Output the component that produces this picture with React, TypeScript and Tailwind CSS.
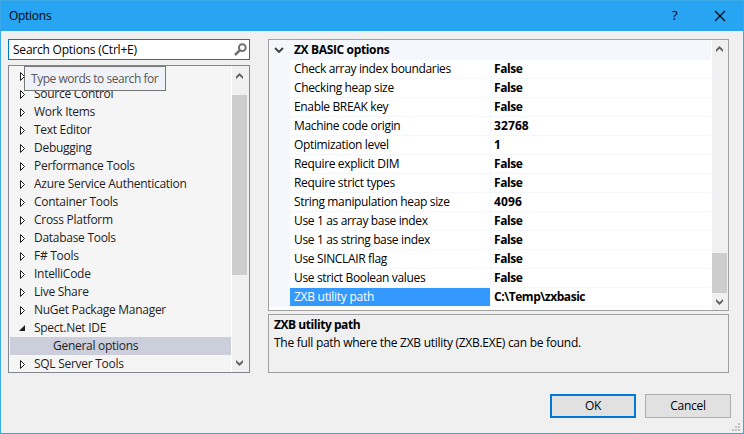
import React from "react";

// The topmost row is scrolled under the search tooltip, so only its expander shows.
const tree = [
  "",
  "Source Control",
  "Work Items",
  "Text Editor",
  "Debugging",
  "Performance Tools",
  "Azure Service Authentication",
  "Container Tools",
  "Cross Platform",
  "Database Tools",
  "F# Tools",
  "IntelliCode",
  "Live Share",
  "NuGet Package Manager",
  "Spect.Net IDE",
  "General options",
  "SQL Server Tools",
];

const options: [string, string][] = [
  ["Check array index boundaries", "False"],
  ["Checking heap size", "False"],
  ["Enable BREAK key", "False"],
  ["Machine code origin", "32768"],
  ["Optimization level", "1"],
  ["Require explicit DIM", "False"],
  ["Require strict types", "False"],
  ["String manipulation heap size", "4096"],
  ["Use 1 as array base index", "False"],
  ["Use 1 as string base index", "False"],
  ["Use SINCLAIR flag", "False"],
  ["Use strict Boolean values", "False"],
  ["ZXB utility path", "C:\\Temp\\zxbasic"],
];

function Chevron({ up = false }: { up?: boolean }) {
  return (
    <svg className="block h-[17px] w-[15px]" viewBox="0 0 15 17">
      <path
        d={up ? "M7.5 5 11 8.5V11L7.5 7.7 4 11V8.5Z" : "M7.5 11 11 7.5V5L7.5 8.3 4 5V7.5Z"}
        fill="#606060"
      />
    </svg>
  );
}

function TreeRow({ label }: { label: string }) {
  const child = label === "General options";
  const open = label === "Spect.Net IDE";
  return (
    <div
      className={
        child
          ? "flex h-[18px] shrink-0 items-center bg-[#cccedb] pl-[43px]"
          : "flex h-[18px] shrink-0 items-center"
      }
    >
      {!child && (
        <svg className="ml-[9px] mr-[4px] h-[18px] w-[11px] shrink-0" viewBox="0 0 11 18">
          {open ? (
            <path d="M6 6v6H0Z" fill="#1e1e1e" />
          ) : (
            <path d="M1.5 5.5v8L5.5 9.5Z" fill="#fff" stroke="#1e1e1e" strokeWidth="1" />
          )}
        </svg>
      )}
      <span className="whitespace-nowrap leading-[18px] text-[#1e1e1e]">{label}</span>
    </div>
  );
}

export default function App() {
  return (
    <div className="flex h-[434px] w-[744px] flex-col overflow-hidden border border-[#3ba9e8] bg-[#f0f0f0] font-['Open_Sans','Noto_Sans',sans-serif] text-[12px] tracking-[-0.28px] text-black">
      <div className="flex h-[30px] shrink-0 items-center bg-[#27a4f2] pl-2">
        <span className="flex-1">Options</span>
        <span className="w-[46px] pl-[4px] text-[13px] font-medium">?</span>
        <svg className="mr-[17px] h-[12px] w-[12px]" viewBox="0 0 12 12">
          <path d="M1 1l10 10M11 1 1 11" stroke="#000" strokeWidth="1.1" />
        </svg>
      </div>

      <div className="flex gap-[18px] pl-[7px] pt-2">
        <div className="flex w-[242px] flex-col gap-[5px]">
          <div className="flex h-[21px] items-center border border-[#007acc] bg-white pl-1">
            <span className="flex-1 whitespace-nowrap tracking-[-0.22px]">Search Options (Ctrl+E)</span>
            <svg className="mr-[2px] h-[13px] w-[13px]" viewBox="0 0 13 13">
              <circle cx="8.3" cy="4.7" r="3.4" fill="none" stroke="#717171" strokeWidth="2" />
              <path d="M5.7 7.3 1 12" stroke="#717171" strokeWidth="2.6" />
            </svg>
          </div>

          <div className="relative flex h-[308px] border border-[#828790] bg-[#f5f5f5]">
            <div className="flex w-[222px] flex-col overflow-hidden pl-px pt-px">
              {tree.map((t) => (
                <TreeRow key={t} label={t} />
              ))}
            </div>
            <div className="flex w-[18px] flex-col border-l border-white bg-[#f0f0f0] pr-[2px]">
              <div className="h-[29px] pt-[2px]">
                <Chevron up />
              </div>
              <div className="h-[180px] bg-[#cdcdcd]" />
              <div className="flex-1" />
              <div className="h-[18px] pt-px">
                <Chevron />
              </div>
            </div>
            <div className="absolute left-[15px] top-0 flex h-[25px] w-[142px] items-center border border-[#767676] bg-[#f1f2f7] pl-[6px] tracking-[-0.47px] text-[#575757]">
              <span className="whitespace-nowrap">Type words to search for</span>
            </div>
          </div>
        </div>

        <div className="flex w-[461px] flex-col gap-[3px]">
          <div className="flex h-[272px] border border-[#a0a0a0] bg-white">
            <div className="flex w-[442px] flex-col">
              <div className="flex h-5 shrink-0 items-center bg-[#f4f7fc]">
                <svg className="ml-[5px] mr-[10px] h-[10px] w-[10px]" viewBox="0 0 10 10">
                  <path d="M1 3 5 7 9 3" fill="none" stroke="#404040" strokeWidth="1.9" />
                </svg>
                <span className="font-bold tracking-[-0.35px]">ZX BASIC options</span>
              </div>
              <div className="border-l-[21px] border-[#f4f7fc]">
                {options.map(([name, value]) => {
                  const selected = name === "ZXB utility path";
                  const numeric = /^\d+$/.test(value);
                  return (
                    <div key={name} className="flex h-[19px] border-b border-[#f4f7fc] leading-[18px]">
                      <div
                        className={
                          selected
                            ? "w-[200px] whitespace-nowrap bg-[#3399ff] pl-1 text-white"
                            : "w-[200px] whitespace-nowrap pl-1 tracking-[-0.35px]"
                        }
                      >
                        {name}
                      </div>
                      <div
                        className={
                          numeric
                            ? "flex-1 border-l border-[#f4f7fc] pl-[3px] font-bold tracking-[0.1px]"
                            : "flex-1 border-l border-[#f4f7fc] pl-[3px] font-bold tracking-[-0.45px]"
                        }
                      >
                        {value}
                      </div>
                    </div>
                  );
                })}
              </div>
            </div>
            <div className="ml-px flex w-4 flex-col bg-[#f0f0f0] pr-px">
              <div className="h-[213px] shrink-0 pt-px">
                <Chevron up />
              </div>
              <div className="h-10 shrink-0 bg-[#cdcdcd]" />
              <div className="h-[17px] pt-px">
                <Chevron />
              </div>
            </div>
          </div>

          <div className="h-[59px] border border-[#a0a0a0] pl-[5px] pt-px leading-[18px]">
            <div className="font-bold tracking-[-0.45px]">ZXB utility path</div>
            <div>The full path where the ZXB utility (ZXB.EXE) can be found.</div>
          </div>
        </div>
      </div>

      <div className="mt-[21px] flex justify-end gap-[9px] pr-3">
        <button className="h-6 w-[86px] border-2 border-[#0078d7] bg-[#e1e1e1] leading-[20px]">OK</button>
        <button className="h-6 w-[86px] border border-[#adadad] bg-[#e1e1e1] leading-[22px]">Cancel</button>
      </div>
      <div className="flex justify-end pr-[3px] pt-[5px]">
        <svg className="block h-2 w-2" viewBox="0 0 8 8" fill="#bfbfbf">
          <path d="M6 0h2v2H6zM3 3h2v2H3zM6 3h2v2H6zM0 6h2v2H0zM3 6h2v2H3zM6 6h2v2H6z" />
        </svg>
      </div>
    </div>
  );
}
